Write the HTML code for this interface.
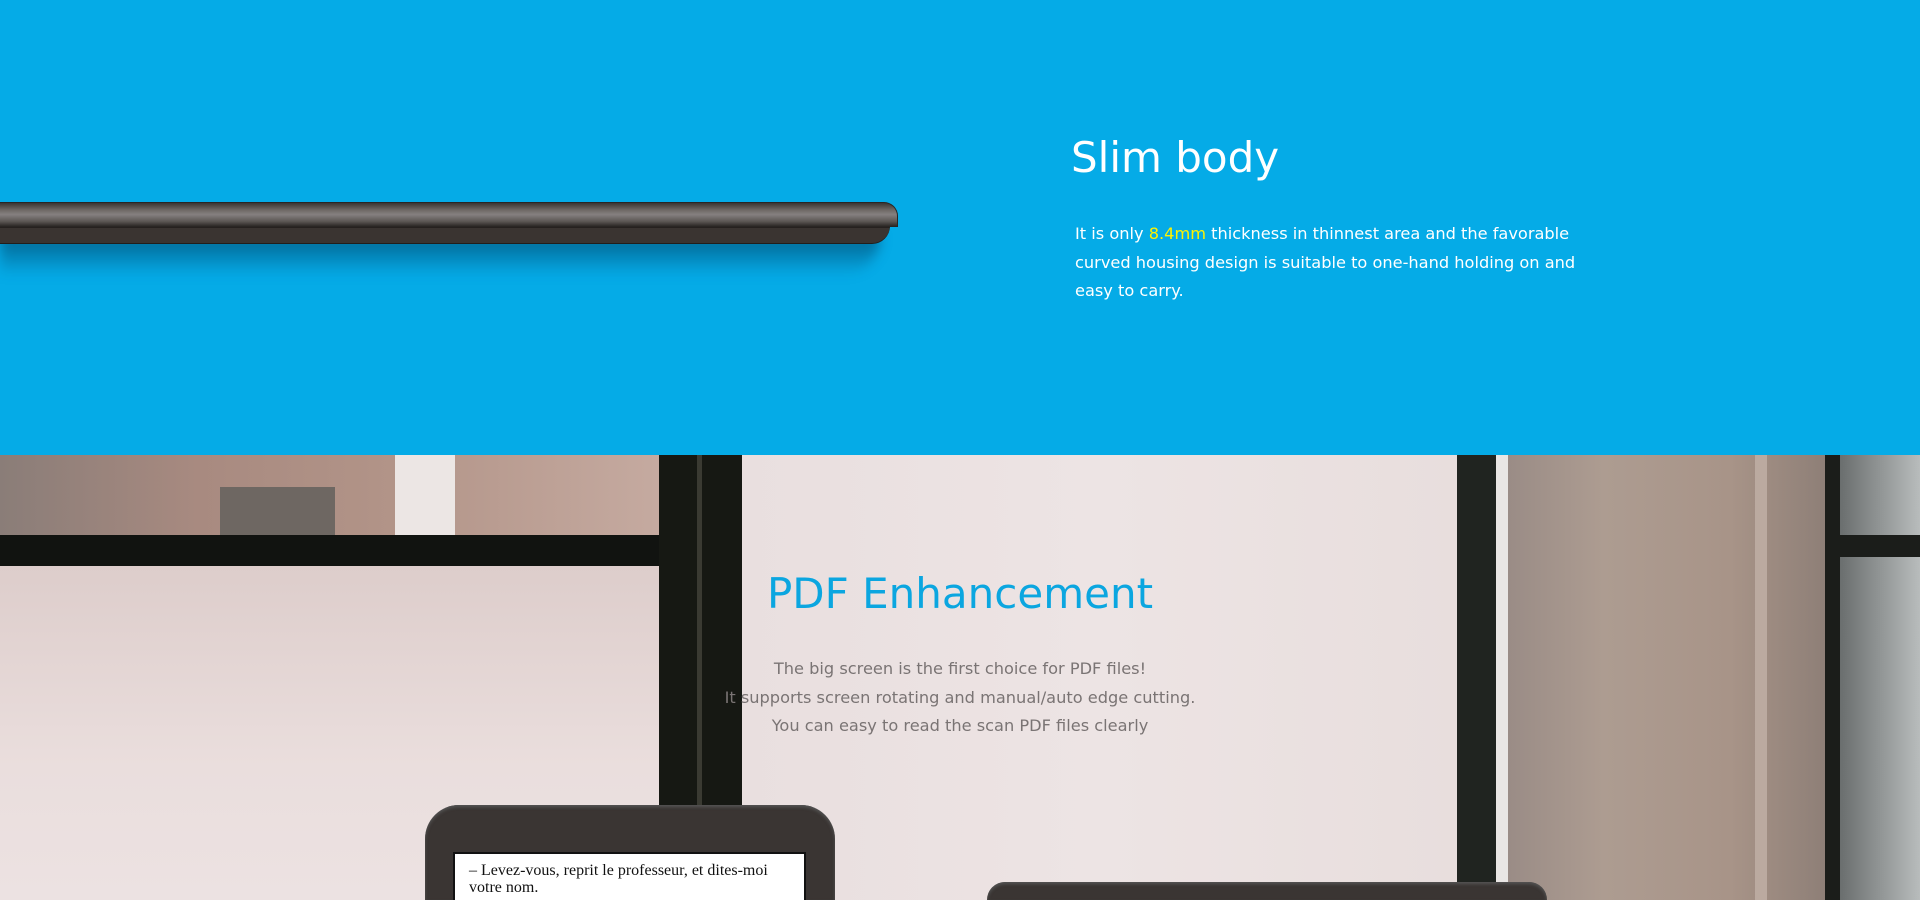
<!DOCTYPE html>
<html><head><meta charset="utf-8"><style>
*{margin:0;padding:0;box-sizing:border-box}
html{width:1920px;height:900px;overflow:hidden;background:#05abe7}
body{width:1920px;height:900px;overflow:hidden;font-family:"DejaVu Sans","Liberation Sans",sans-serif;position:relative;background:#05abe7}
.blue{position:absolute;left:0;top:0;width:1920px;height:455px;background:#05abe7;overflow:hidden}
.shadow{position:absolute;left:0;top:236px;width:880px;height:40px;background:linear-gradient(180deg,rgba(0,40,70,.55),rgba(0,80,130,0));filter:blur(6px);border-radius:0 0 40px 0}
.bar1{position:absolute;left:0;top:202px;width:898px;height:25px;border-radius:0 14px 0 0;background:linear-gradient(180deg,#3a3532 0%,#6e6865 30%,#858080 50%,#5c5754 80%,#2e2a28 100%);border:1px solid #2a2624;border-left:none}
.bar2{position:absolute;left:0;top:226px;width:890px;height:18px;background:#3a3431;border-radius:0 0 28px 0;border-top:2px solid #26211f;border-bottom:1px solid #221e1c}
h1{position:absolute;left:1071px;top:133px;font-weight:normal;font-size:42px;color:#fff}
.p1{position:absolute;left:1075px;top:220px;width:520px;font-size:16.2px;line-height:28.5px;color:#fff}
.p1 span{color:#fff200}
.photo{position:absolute;left:0;top:455px;width:1920px;height:445px;background:#ece1e1;overflow:hidden}
.r{position:absolute}
h2{position:absolute;left:0;width:1920px;text-align:center;top:569px;font-weight:normal;font-size:42px;color:#0ba6e0}
.p2{position:absolute;left:0;width:1920px;text-align:center;top:655px;font-size:16.2px;line-height:28.5px;color:#7a7474}
.dev{position:absolute;background:#3a3533;border-radius:34px 34px 0 0;box-shadow:inset 0 2px 3px #555}
.scr{position:absolute;left:453px;top:852px;width:353px;height:48px;overflow:hidden;background:#fff;border:2px solid #111;border-bottom:none;font-family:"Liberation Serif",serif;font-size:16px;line-height:17px;padding:8px 14px;color:#111}
</style></head><body>
<div class="blue">
<div class="shadow"></div>
<div class="bar2"></div>
<div class="bar1"></div>
</div>
<h1>Slim body</h1>
<div class="p1">It is only <span>8.4mm</span> thickness in thinnest area and the favorable curved housing design is suitable to one-hand holding on and easy to carry.</div>
<div class="photo">
<div class="r" style="left:0;top:0;width:659px;height:80px;background:linear-gradient(90deg,#8a7d78,#a88a80 30%,#b29488 60%,#c5aaa0)"></div>
<div class="r" style="left:220px;top:32px;width:115px;height:48px;background:#6e6762"></div>
<div class="r" style="left:395px;top:0;width:60px;height:80px;background:#ece6e4"></div>
<div class="r" style="left:0;top:80px;width:700px;height:31px;background:#111310"></div>
<div class="r" style="left:0;top:111px;width:659px;height:334px;background:linear-gradient(180deg,#ddcdcb,#eadedd 60%,#ece2e2)"></div>
<div class="r" style="left:659px;top:0;width:83px;height:445px;background:#161813"></div>
<div class="r" style="left:697px;top:0;width:5px;height:445px;background:#3a3a32"></div>
<div class="r" style="left:742px;top:0;width:715px;height:445px;background:linear-gradient(90deg,#e9dfdf,#ede4e4 50%,#e8dedd)"></div>
<div class="r" style="left:1457px;top:0;width:39px;height:445px;background:#202420"></div>
<div class="r" style="left:1496px;top:0;width:12px;height:445px;background:#e9e6e4"></div>
<div class="r" style="left:1508px;top:0;width:317px;height:445px;background:linear-gradient(90deg,#9a8c86,#ad9c91 30%,#a89488 70%,#8e7f77)"></div>
<div class="r" style="left:1755px;top:0;width:12px;height:445px;background:#bbaaa0"></div>
<div class="r" style="left:1825px;top:0;width:15px;height:445px;background:#1b1d1a"></div>
<div class="r" style="left:1840px;top:0;width:80px;height:445px;background:linear-gradient(90deg,#6a6e6e,#b8bcbc)"></div>
<div class="r" style="left:1825px;top:80px;width:95px;height:22px;background:#1b1d1a"></div>
<div class="dev" style="left:425px;top:350px;width:410px;height:95px"></div>
<div class="dev" style="left:987px;top:427px;width:560px;height:18px;border-radius:30px 30px 0 0"></div>
</div>
<h2>PDF Enhancement</h2>
<div class="p2">The big screen is the first choice for PDF files!<br>It supports screen rotating and manual/auto edge cutting.<br>You can easy to read the scan PDF files clearly</div>
<div class="scr">– Levez-vous, reprit le professeur, et dites-moi votre nom.</div>
</body></html>
